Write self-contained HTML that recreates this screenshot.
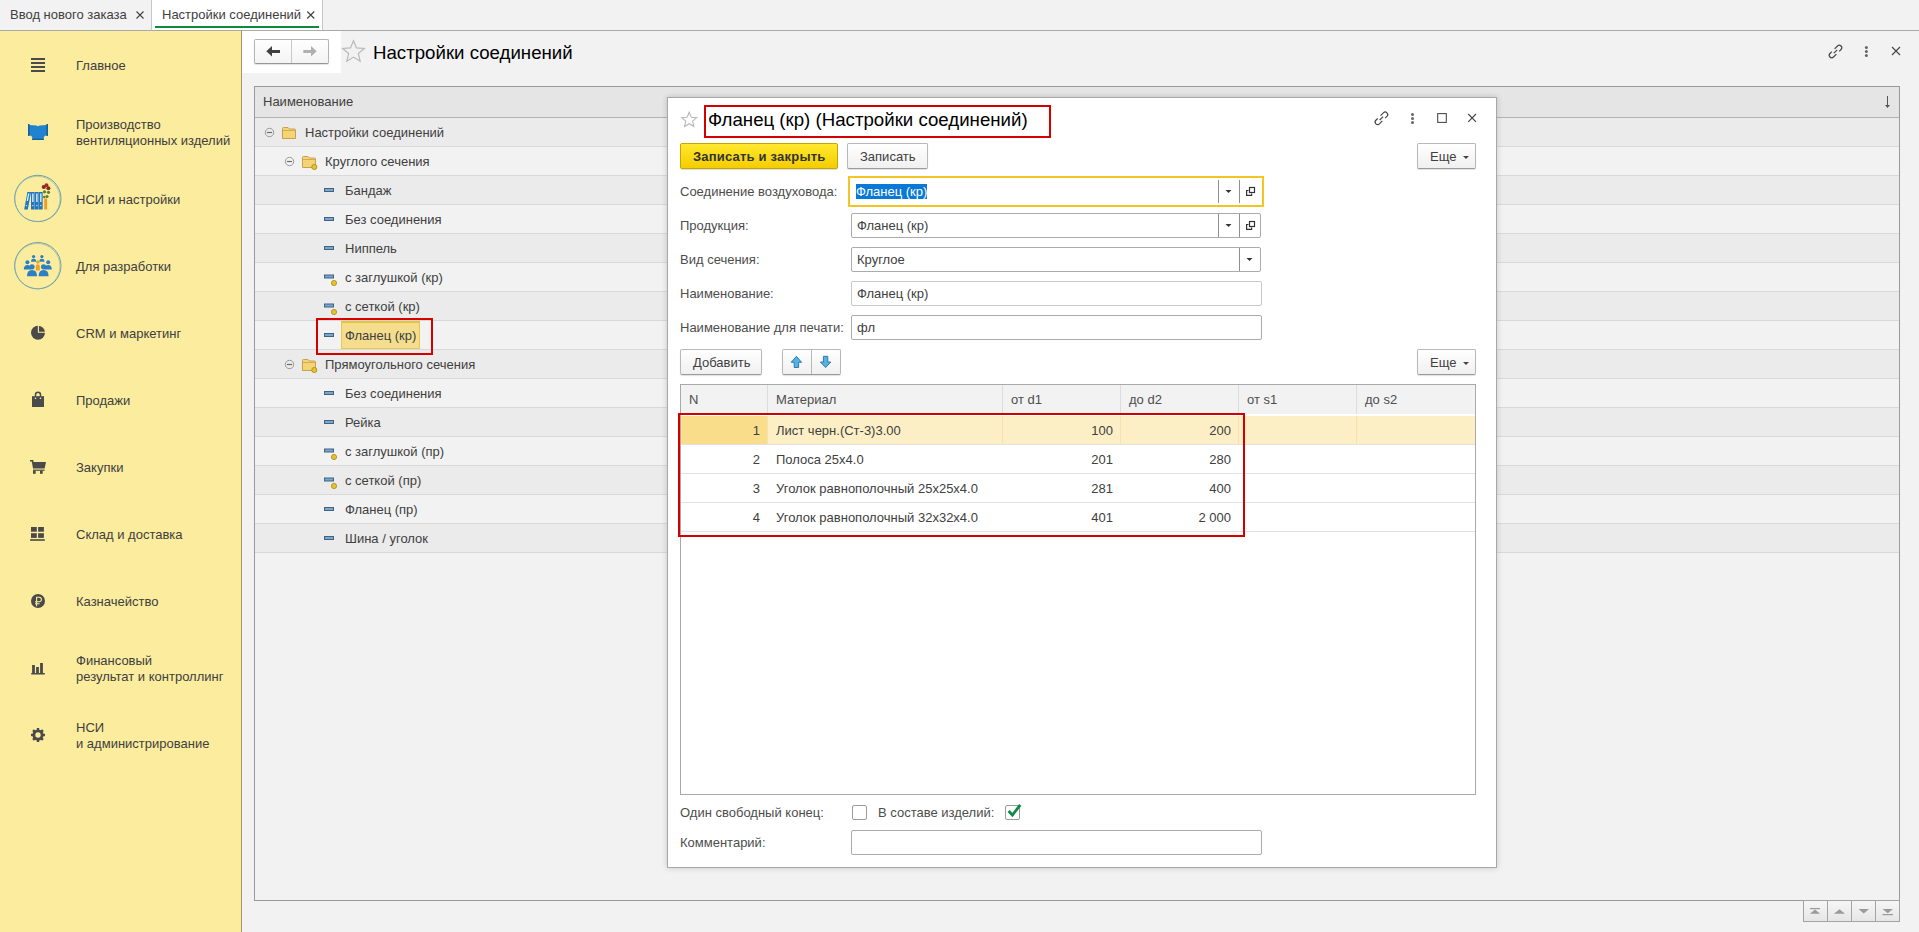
<!DOCTYPE html>
<html><head><meta charset="utf-8"><style>
*{box-sizing:border-box;margin:0;padding:0}
html,body{width:1919px;height:932px;overflow:hidden}
body{position:relative;background:#f2f2f2;font-family:"Liberation Sans",sans-serif;font-size:13px;color:#404040}
.a{position:absolute}
.t{position:absolute;white-space:nowrap;line-height:16px}
#tabbar{left:0;top:0;width:1919px;height:31px;background:#f2f2f2;border-bottom:1px solid #a8a8a8}
#tab2{left:151px;top:0;width:172px;height:31px;background:#fff;border-left:1px solid #c6c6c6;border-right:1px solid #c6c6c6;border-bottom:1px solid #a8a8a8}
#tabline{left:155px;top:26px;width:164px;height:2px;background:#0e8a3c}
#side{left:0;top:31px;width:242px;height:901px;background:#fbec9e;border-right:1px solid #a09660}
.si{position:absolute;left:76px;color:#404040;line-height:16px;white-space:nowrap}
#navwhite{left:242px;top:31px;width:99px;height:42px;background:#fff}
#list{left:254px;top:86px;width:1646px;height:815px;border:1px solid #989a9c;background:#f2f2f2}
#lhead{left:255px;top:87px;width:1644px;height:31px;background:#e5e5e5;border-bottom:1px solid #b2b2b2}
.row{position:absolute;left:255px;width:1644px;height:29px;border-bottom:1px solid #d9d9d9}
.rd{background:#ebebeb}.rl{background:#f2f2f2}
.rt{position:absolute;white-space:nowrap;line-height:16px;color:#404040}
#modal{left:667px;top:97px;width:830px;height:771px;background:#fff;border:1px solid #a8a8a8;box-shadow:0 0 6px rgba(0,0,0,.18)}
.lbl{position:absolute;left:680px;white-space:nowrap;line-height:16px;color:#4d4d4d}
.fld{position:absolute;left:851px;width:411px;height:25px;background:#fff;border:1px solid #ababab;border-radius:2px}
.btn{position:absolute;height:26px;border:1px solid #b8b8b8;border-bottom-color:#9a9a9a;border-radius:2px;background:linear-gradient(#ffffff,#f0f0f0);box-shadow:0 1px 1px rgba(0,0,0,.12)}
.btxt{position:absolute;white-space:nowrap;line-height:16px;color:#404040}
#tbl{left:680px;top:384px;width:796px;height:411px;border:1px solid #a9a9a9;background:#fff}
.th{position:absolute;top:385px;height:29px;background:#f2f2f2}
.vsep{position:absolute;width:1px;background:#dcdcdc}
.mr{position:absolute;left:681px;width:794px;height:29px;border-bottom:1px solid #e2e2e2}
.num{position:absolute;white-space:nowrap;line-height:16px;color:#404040;text-align:right}
.red{position:absolute;border:2px solid #d40000}
.sep{position:absolute;width:1px;background:#8f8f8f}
</style></head><body>
<div id="tabbar" class="a"></div>
<div id="tab2" class="a"></div>
<div id="tabline" class="a"></div>
<div class="t" style="left:10px;top:7px">Ввод нового заказа</div>
<div class="t" style="left:162px;top:7px">Настройки соединений</div>
<div id="side" class="a"></div>
<div class="si" style="top:58px">Главное</div>
<div class="si" style="top:117px">Производство<br>вентиляционных изделий</div>
<div class="si" style="top:192px">НСИ и настройки</div>
<div class="si" style="top:259px">Для разработки</div>
<div class="si" style="top:326px">CRM и маркетинг</div>
<div class="si" style="top:393px">Продажи</div>
<div class="si" style="top:460px">Закупки</div>
<div class="si" style="top:527px">Склад и доставка</div>
<div class="si" style="top:594px">Казначейство</div>
<div class="si" style="top:653px">Финансовый<br>результат и контроллинг</div>
<div class="si" style="top:720px">НСИ<br>и администрирование</div>
<div id="navwhite" class="a"></div>
<div class="a" style="left:254px;top:39px;width:75px;height:25px;border:1px solid #b4b4b4;border-bottom-color:#969696;border-radius:2px;background:linear-gradient(#ffffff,#f3f3f3);box-shadow:0 1px 1px rgba(0,0,0,.12)"></div>
<div class="a" style="left:291px;top:40px;width:1px;height:23px;background:#c8c8c8"></div>
<div class="t" style="left:373px;top:42px;font-size:18.67px;line-height:22px;color:#000">Настройки соединений</div>
<div id="list" class="a"></div>
<div id="lhead" class="a"></div>
<div class="rt" style="left:263px;top:94px">Наименование</div>
<div class="row rd" style="top:118px;height:29px"></div>
<div class="rt" style="left:305px;top:125px">Настройки соединений</div>
<div class="row rl" style="top:147px;height:29px"></div>
<div class="rt" style="left:325px;top:154px">Круглого сечения</div>
<div class="row rd" style="top:176px;height:29px"></div>
<div class="rt" style="left:345px;top:183px">Бандаж</div>
<div class="row rl" style="top:205px;height:29px"></div>
<div class="rt" style="left:345px;top:212px">Без соединения</div>
<div class="row rd" style="top:234px;height:29px"></div>
<div class="rt" style="left:345px;top:241px">Ниппель</div>
<div class="row rl" style="top:263px;height:29px"></div>
<div class="rt" style="left:345px;top:270px">с заглушкой (кр)</div>
<div class="row rd" style="top:292px;height:29px"></div>
<div class="rt" style="left:345px;top:299px">с сеткой (кр)</div>
<div class="row rl" style="top:321px;height:29px"></div>
<div class="a" style="left:341px;top:321px;width:79px;height:28px;background:#f4dd8c;border:1px solid #e9c84a;border-top:2px solid #e8c23a"></div>
<div class="rt" style="left:345px;top:328px">Фланец (кр)</div>
<div class="row rd" style="top:350px;height:29px"></div>
<div class="rt" style="left:325px;top:357px">Прямоугольного сечения</div>
<div class="row rl" style="top:379px;height:29px"></div>
<div class="rt" style="left:345px;top:386px">Без соединения</div>
<div class="row rd" style="top:408px;height:29px"></div>
<div class="rt" style="left:345px;top:415px">Рейка</div>
<div class="row rl" style="top:437px;height:29px"></div>
<div class="rt" style="left:345px;top:444px">с заглушкой (пр)</div>
<div class="row rd" style="top:466px;height:29px"></div>
<div class="rt" style="left:345px;top:473px">с сеткой (пр)</div>
<div class="row rl" style="top:495px;height:29px"></div>
<div class="rt" style="left:345px;top:502px">Фланец (пр)</div>
<div class="row rd" style="top:524px;height:29px"></div>
<div class="rt" style="left:345px;top:531px">Шина / уголок</div>
<div class="red" style="left:316px;top:318px;width:117px;height:37px"></div>
<div class="a" style="left:1803px;top:900px;width:25px;height:22px;border:1px solid #a3a3a3;background:linear-gradient(#f6f6f6,#e6e6e6)"></div>
<div class="a" style="left:1827px;top:900px;width:25px;height:22px;border:1px solid #a3a3a3;background:linear-gradient(#f6f6f6,#e6e6e6)"></div>
<div class="a" style="left:1851px;top:900px;width:25px;height:22px;border:1px solid #a3a3a3;background:linear-gradient(#f6f6f6,#e6e6e6)"></div>
<div class="a" style="left:1875px;top:900px;width:25px;height:22px;border:1px solid #a3a3a3;background:linear-gradient(#f6f6f6,#e6e6e6)"></div>
<div id="modal" class="a"></div>
<div class="red" style="left:704px;top:105px;width:347px;height:33px"></div>
<div class="t" style="left:708px;top:109px;font-size:18.67px;line-height:22px;color:#000">Фланец (кр) (Настройки соединений)</div>
<div class="a" style="left:680px;top:143px;width:158px;height:26px;border:1px solid #c4a600;border-radius:2px;background:linear-gradient(#ffe82e,#f4cd00);box-shadow:0 1px 1px rgba(0,0,0,.15)"></div>
<div class="btxt" style="left:693px;top:149px;font-weight:bold;color:#333;letter-spacing:0.2px">Записать и закрыть</div>
<div class="btn" style="left:847px;top:143px;width:81px"></div>
<div class="btxt" style="left:860px;top:149px">Записать</div>
<div class="btn" style="left:1417px;top:143px;width:59px"></div>
<div class="btxt" style="left:1430px;top:149px">Еще</div>
<div class="btn" style="left:1417px;top:349px;width:59px"></div>
<div class="btxt" style="left:1430px;top:355px">Еще</div>
<div class="lbl" style="top:184px">Соединение воздуховода:</div>
<div class="a" style="left:848px;top:176px;width:416px;height:31px;border:2px solid #f3c523;background:#fff"></div>
<div class="a" style="left:856px;top:184px;width:71px;height:15px;background:#0a78d7"></div>
<div class="t" style="left:856px;top:184px;color:#fff">Фланец (кр)</div>
<div class="sep" style="left:1218px;top:180px;height:23px"></div>
<div class="sep" style="left:1239px;top:180px;height:23px"></div>
<div class="lbl" style="top:218px">Продукция:</div>
<div class="fld" style="top:213px;width:410px;"></div>
<div class="t" style="left:857px;top:218px;color:#404040">Фланец (кр)</div>
<div class="sep" style="left:1218px;top:214px;height:23px"></div>
<div class="sep" style="left:1239px;top:214px;height:23px"></div>
<div class="lbl" style="top:252px">Вид сечения:</div>
<div class="fld" style="top:247px;width:410px;"></div>
<div class="t" style="left:857px;top:252px;color:#404040">Круглое</div>
<div class="sep" style="left:1239px;top:248px;height:23px"></div>
<div class="lbl" style="top:286px">Наименование:</div>
<div class="fld" style="top:281px;width:411px;border-color:#c9c9c9;"></div>
<div class="t" style="left:857px;top:286px;color:#404040">Фланец (кр)</div>
<div class="lbl" style="top:320px">Наименование для печати:</div>
<div class="fld" style="top:315px;width:411px;"></div>
<div class="t" style="left:857px;top:320px;color:#404040">фл</div>
<div class="btn" style="left:680px;top:349px;width:82px"></div>
<div class="btxt" style="left:693px;top:355px">Добавить</div>
<div class="btn" style="left:782px;top:349px;width:59px"></div>
<div class="a" style="left:811px;top:350px;width:1px;height:24px;background:#b8b8b8"></div>
<div id="tbl" class="a"></div>
<div class="th" style="left:681px;width:794px"></div>
<div class="vsep" style="left:767px;top:385px;height:29px"></div>
<div class="vsep" style="left:1002px;top:385px;height:29px"></div>
<div class="vsep" style="left:1120px;top:385px;height:29px"></div>
<div class="vsep" style="left:1238px;top:385px;height:29px"></div>
<div class="vsep" style="left:1356px;top:385px;height:29px"></div>
<div class="t" style="left:689px;top:392px;color:#4d4d4d">N</div>
<div class="t" style="left:776px;top:392px;color:#4d4d4d">Материал</div>
<div class="t" style="left:1011px;top:392px;color:#4d4d4d">от d1</div>
<div class="t" style="left:1129px;top:392px;color:#4d4d4d">до d2</div>
<div class="t" style="left:1247px;top:392px;color:#4d4d4d">от s1</div>
<div class="t" style="left:1365px;top:392px;color:#4d4d4d">до s2</div>
<div class="mr" style="top:416px;background:#fcefc6"></div>
<div class="a" style="left:681px;top:416px;width:86px;height:28px;background:#f9dd8b"></div>
<div class="vsep" style="left:767px;top:416px;height:28px;background:#f3e3b0"></div>
<div class="vsep" style="left:1002px;top:416px;height:28px;background:#f3e3b0"></div>
<div class="vsep" style="left:1120px;top:416px;height:28px;background:#f3e3b0"></div>
<div class="vsep" style="left:1238px;top:416px;height:28px;background:#f3e3b0"></div>
<div class="vsep" style="left:1356px;top:416px;height:28px;background:#f3e3b0"></div>
<div class="num" style="left:681px;width:79px;top:423px">1</div>
<div class="t" style="left:776px;top:423px">Лист черн.(Ст-3)3.00</div>
<div class="num" style="left:1003px;width:110px;top:423px">100</div>
<div class="num" style="left:1121px;width:110px;top:423px">200</div>
<div class="mr" style="top:445px"></div>
<div class="num" style="left:681px;width:79px;top:452px">2</div>
<div class="t" style="left:776px;top:452px">Полоса 25x4.0</div>
<div class="num" style="left:1003px;width:110px;top:452px">201</div>
<div class="num" style="left:1121px;width:110px;top:452px">280</div>
<div class="mr" style="top:474px"></div>
<div class="num" style="left:681px;width:79px;top:481px">3</div>
<div class="t" style="left:776px;top:481px">Уголок равнополочный 25x25x4.0</div>
<div class="num" style="left:1003px;width:110px;top:481px">281</div>
<div class="num" style="left:1121px;width:110px;top:481px">400</div>
<div class="mr" style="top:503px"></div>
<div class="num" style="left:681px;width:79px;top:510px">4</div>
<div class="t" style="left:776px;top:510px">Уголок равнополочный 32x32x4.0</div>
<div class="num" style="left:1003px;width:110px;top:510px">401</div>
<div class="num" style="left:1121px;width:110px;top:510px">2 000</div>
<div class="red" style="left:678px;top:413px;width:567px;height:124px"></div>
<div class="lbl" style="top:805px">Один свободный конец:</div>
<div class="a" style="left:852px;top:805px;width:15px;height:15px;border:1px solid #9a9a9a;border-radius:2px;background:#fff"></div>
<div class="t" style="left:878px;top:805px;color:#4d4d4d">В составе изделий:</div>
<div class="a" style="left:1005px;top:805px;width:15px;height:15px;border:1px solid #9a9a9a;border-radius:2px;background:#fff"></div>
<div class="lbl" style="top:835px">Комментарий:</div>
<div class="fld" style="top:830px;width:411px"></div>
<svg class="a" style="left:0;top:0" width="1919" height="932" viewBox="0 0 1919 932"><path d="M136.5 11.5 L143.5 18.5 M143.5 11.5 L136.5 18.5" stroke="#404040" stroke-width="1.1"/><path d="M307.25 11.5 L314.25 18.5 M314.25 11.5 L307.25 18.5" stroke="#404040" stroke-width="1.1"/><rect x="31" y="58" width="14" height="2" fill="#4a4a4a"/><rect x="31" y="62" width="14" height="2" fill="#4a4a4a"/><rect x="31" y="66" width="14" height="2" fill="#4a4a4a"/><rect x="31" y="70" width="14" height="2" fill="#4a4a4a"/><path d="M29 125 L36.5 125.6 Q38 126.8 39.5 125.6 L47 125 L47 135.5 L45.5 135.5 Q43.5 136 43.5 139 L32.5 139 Q32.5 136 30.5 135.5 L29 135.5 Z" fill="#1f83d0"/><rect x="28" y="124" width="1.6" height="12" fill="#17609a"/><rect x="46.4" y="124" width="1.6" height="12" fill="#17609a"/><rect x="32" y="138.6" width="12" height="1.4" fill="#17609a"/><circle cx="37.8" cy="198.5" r="23.2" fill="none" stroke="#5f9aa6" stroke-width="0.9"/><circle cx="37.4" cy="198.9" r="22.6" fill="none" stroke="#7fb0b5" stroke-width="0.6"/><circle cx="37.8" cy="265.7" r="23.2" fill="none" stroke="#5f9aa6" stroke-width="0.9"/><circle cx="37.4" cy="266.09999999999997" r="22.6" fill="none" stroke="#7fb0b5" stroke-width="0.6"/><polygon points="24.2,209.5 27.4,192 31,192 27.8,209.5" fill="#1f78c0"/><polygon points="26.6,201 28.1,193.6 29.4,193.6 27.9,201" fill="#dff3ff"/><circle cx="26.3" cy="205.6" r="0.7" fill="#dff3ff"/><rect x="31.0" y="192" width="3.7" height="17.5" fill="#1f78c0"/><rect x="32.2" y="193.5" width="1.3" height="8.5" fill="#e6f6ff"/><circle cx="32.85" cy="205.6" r="0.7" fill="#dff3ff"/><rect x="35.0" y="192" width="3.7" height="17.5" fill="#1f78c0"/><rect x="36.2" y="193.5" width="1.3" height="8.5" fill="#e6f6ff"/><circle cx="36.85" cy="205.6" r="0.7" fill="#dff3ff"/><rect x="39.0" y="192" width="3.7" height="17.5" fill="#1f78c0"/><rect x="40.2" y="193.5" width="1.3" height="8.5" fill="#e6f6ff"/><circle cx="40.85" cy="205.6" r="0.7" fill="#dff3ff"/><rect x="44.2" y="198.5" width="2.9" height="11" fill="#f29a2a"/><circle cx="44.5" cy="191.8" r="1.6" fill="#5f7d2c"/><circle cx="48.5" cy="192.3" r="1.6" fill="#5f7d2c"/><circle cx="47" cy="196.5" r="1.6" fill="#5f7d2c"/><circle cx="44.2" cy="197" r="1.2" fill="#5f7d2c"/><circle cx="43.8" cy="187" r="2.1" fill="#8e2a22"/><circle cx="46.4" cy="185.3" r="2" fill="#9a2e25"/><circle cx="48.4" cy="188.3" r="2" fill="#8e2a22"/><circle cx="33.6" cy="256.6" r="1.6" fill="#2b7fc4"/><path d="M31.0 261.80000000000007 Q31.0 258.80000000000007 33.6 258.80000000000007 Q36.2 258.80000000000007 36.2 261.80000000000007 Z" fill="#2b7fc4"/><circle cx="41.9" cy="256.6" r="1.6" fill="#2b7fc4"/><path d="M39.3 261.80000000000007 Q39.3 258.80000000000007 41.9 258.80000000000007 Q44.5 258.80000000000007 44.5 261.80000000000007 Z" fill="#2b7fc4"/><circle cx="27.4" cy="262.3" r="2.0" fill="#2b7fc4"/><path d="M23.799999999999997 269.40000000000003 Q23.799999999999997 264.90000000000003 27.4 264.90000000000003 Q31.0 264.90000000000003 31.0 269.40000000000003 Z" fill="#2b7fc4"/><circle cx="48.2" cy="262.3" r="2.0" fill="#2b7fc4"/><path d="M44.6 269.40000000000003 Q44.6 264.90000000000003 48.2 264.90000000000003 Q51.800000000000004 264.90000000000003 51.800000000000004 269.40000000000003 Z" fill="#2b7fc4"/><circle cx="37.8" cy="262" r="1.8" fill="#f0a030"/><path d="M35.8 270.5 V266.5 Q35.8 264.3 37.8 264.3 Q39.8 264.3 39.8 266.5 V270.5 Z" fill="#f0a030"/><circle cx="32.0" cy="266.8" r="2.6" fill="#2b7fc4"/><path d="M27.0 276.30000000000007 Q27.0 270.00000000000006 32.0 270.00000000000006 Q37.0 270.00000000000006 37.0 276.30000000000007 Z" fill="#2b7fc4"/><circle cx="43.6" cy="266.8" r="2.6" fill="#2b7fc4"/><path d="M38.6 276.30000000000007 Q38.6 270.00000000000006 43.6 270.00000000000006 Q48.6 270.00000000000006 48.6 276.30000000000007 Z" fill="#2b7fc4"/><circle cx="38" cy="332.8" r="7" fill="#4a4a4a"/><path d="M38.4 325 V332.3 H46" stroke="#fbec9e" stroke-width="1.1" fill="none"/><rect x="32" y="396.2" width="12" height="10.8" fill="#4a4a4a"/><path d="M35.5 398.5 V394.8 A2.5 2.5 0 0 1 40.5 394.8 V398.5" stroke="#4a4a4a" stroke-width="1.5" fill="none"/><circle cx="35.5" cy="398.3" r="0.8" fill="#fff7c8"/><circle cx="40.5" cy="398.3" r="0.8" fill="#fff7c8"/><path d="M30 460.8 H32.6 V462" stroke="#4a4a4a" stroke-width="1.6" fill="none"/><polygon points="31.8,462 46,462 44.6,468.6 33,468.6" fill="#4a4a4a"/><rect x="33" y="469.6" width="11.6" height="1.2" fill="#4a4a4a"/><rect x="33" y="470.6" width="2.7" height="3.2" fill="#4a4a4a"/><rect x="40" y="470.6" width="2.7" height="3.2" fill="#4a4a4a"/><rect x="31" y="527" width="5.8" height="4.7" fill="#4a4a4a"/><rect x="38.1" y="527" width="5.8" height="4.7" fill="#4a4a4a"/><rect x="31" y="533.2" width="5.8" height="4.7" fill="#4a4a4a"/><rect x="38.1" y="533.2" width="5.8" height="4.7" fill="#4a4a4a"/><rect x="30.1" y="539.2" width="14.7" height="1.6" fill="#4a4a4a"/><circle cx="38" cy="601" r="7" fill="#4a4a4a"/><path d="M36.6 606.3 V597.3 H39.2 A2.2 2.2 0 0 1 39.2 601.7 H35 M35 603.7 H39.6" stroke="#fbec9e" stroke-width="1.1" fill="none"/><rect x="32.1" y="665" width="2.8" height="8.5" fill="#4a4a4a"/><rect x="36.1" y="667" width="2.8" height="6.5" fill="#4a4a4a"/><rect x="40.1" y="663" width="2.8" height="10.5" fill="#4a4a4a"/><rect x="31" y="673" width="14" height="1.5" rx="0.7" fill="#4a4a4a"/><g transform="translate(38 735)"><circle r="5.6" fill="#4a4a4a"/><rect x="-1.2" y="-7" width="2.4" height="3" fill="#4a4a4a" transform="rotate(0)"/><rect x="-1.2" y="-7" width="2.4" height="3" fill="#4a4a4a" transform="rotate(45)"/><rect x="-1.2" y="-7" width="2.4" height="3" fill="#4a4a4a" transform="rotate(90)"/><rect x="-1.2" y="-7" width="2.4" height="3" fill="#4a4a4a" transform="rotate(135)"/><rect x="-1.2" y="-7" width="2.4" height="3" fill="#4a4a4a" transform="rotate(180)"/><rect x="-1.2" y="-7" width="2.4" height="3" fill="#4a4a4a" transform="rotate(225)"/><rect x="-1.2" y="-7" width="2.4" height="3" fill="#4a4a4a" transform="rotate(270)"/><rect x="-1.2" y="-7" width="2.4" height="3" fill="#4a4a4a" transform="rotate(315)"/><circle r="2.7" fill="#fbec9e"/></g><polygon points="266.3,51.3 272,46 272,56.5" fill="#404040"/><rect x="271" y="50" width="9" height="3" fill="#404040"/><polygon points="316.7,51.3 311,46 311,56.5" fill="#b0b0b0"/><rect x="303.3" y="50" width="8.5" height="3" fill="#b0b0b0"/><polygon points="353.50,40.70 356.49,47.89 364.25,48.51 358.34,53.57 360.14,61.14 353.50,57.09 346.86,61.14 348.66,53.57 342.75,48.51 350.51,47.89" fill="none" stroke="#b8b8b8" stroke-width="1.2" stroke-linejoin="miter"/><polygon points="689.20,112.20 691.29,117.22 696.71,117.66 692.58,121.20 693.84,126.49 689.20,123.66 684.56,126.49 685.82,121.20 681.69,117.66 687.11,117.22" fill="none" stroke="#b8b8b8" stroke-width="1.1"/><g transform="translate(1835.5 51.5) rotate(-45)" stroke="#444" stroke-width="1.15" fill="none"><path d="M1.2 -2.5 H5.3 A2.5 2.5 0 0 1 5.3 2.5 H2.8"/><path d="M-1.2 2.5 H-5.3 A2.5 2.5 0 0 1 -5.3 -2.5 H-2.8"/><path d="M-2.4 0 H2.4"/></g><g transform="translate(1381.4 118.3) rotate(-45)" stroke="#444" stroke-width="1.15" fill="none"><path d="M1.2 -2.5 H5.3 A2.5 2.5 0 0 1 5.3 2.5 H2.8"/><path d="M-1.2 2.5 H-5.3 A2.5 2.5 0 0 1 -5.3 -2.5 H-2.8"/><path d="M-2.4 0 H2.4"/></g><circle cx="1866.4" cy="47.4" r="1.5" fill="#666"/><circle cx="1866.4" cy="51.6" r="1.5" fill="#666"/><circle cx="1866.4" cy="55.6" r="1.5" fill="#666"/><circle cx="1412.5" cy="114.4" r="1.5" fill="#666"/><circle cx="1412.5" cy="118.4" r="1.5" fill="#666"/><circle cx="1412.5" cy="122.5" r="1.5" fill="#666"/><path d="M1892 47 L1900 55 M1900 47 L1892 55" stroke="#444" stroke-width="1.1"/><path d="M1468.2 114 L1476 121.9 M1476 114 L1468.2 121.9" stroke="#444" stroke-width="1.1"/><rect x="1437.7" y="113.6" width="8.6" height="8.8" fill="none" stroke="#444" stroke-width="1.05"/><path d="M1887.5 96 V106" stroke="#555" stroke-width="1"/><polygon points="1885,105 1890,105 1887.5,108" fill="#555"/><circle cx="269.5" cy="132.5" r="4.2" fill="none" stroke="#9a9a9a" stroke-width="1"/><path d="M266.9 132.5 H272.1" stroke="#6a6a6a" stroke-width="1.2"/><path d="M282.5 138.5 V128.5 Q282.5 127.5 283.5 127.5 H288 L289.5 129 H294.5 Q295.5 129 295.5 130 V138.5 Z" fill="#f5d475" stroke="#c8a24a" stroke-width="1"/><path d="M283 130.5 H295" stroke="#c8a24a" stroke-width="0.8"/><circle cx="289.5" cy="161.5" r="4.2" fill="none" stroke="#9a9a9a" stroke-width="1"/><path d="M286.9 161.5 H292.1" stroke="#6a6a6a" stroke-width="1.2"/><path d="M302.5 167.5 V157.5 Q302.5 156.5 303.5 156.5 H308 L309.5 158 H314.5 Q315.5 158 315.5 159 V167.5 Z" fill="#f5d475" stroke="#c8a24a" stroke-width="1"/><path d="M303 159.5 H315" stroke="#c8a24a" stroke-width="0.8"/><circle cx="314.3" cy="167" r="2.6" fill="#e6c22e" stroke="#a8891a" stroke-width="0.8"/><rect x="324.5" y="188.5" width="9" height="3" fill="#7aa6cc" stroke="#3f6384" stroke-width="1"/><rect x="324.5" y="217.5" width="9" height="3" fill="#7aa6cc" stroke="#3f6384" stroke-width="1"/><rect x="324.5" y="246.5" width="9" height="3" fill="#7aa6cc" stroke="#3f6384" stroke-width="1"/><rect x="324.5" y="275.0" width="9" height="3" fill="#7aa6cc" stroke="#3f6384" stroke-width="1"/><circle cx="334" cy="283" r="2.6" fill="#e6c22e" stroke="#a8891a" stroke-width="0.8"/><rect x="324.5" y="304.0" width="9" height="3" fill="#7aa6cc" stroke="#3f6384" stroke-width="1"/><circle cx="334" cy="312" r="2.6" fill="#e6c22e" stroke="#a8891a" stroke-width="0.8"/><rect x="324.5" y="333.5" width="9" height="3" fill="#7aa6cc" stroke="#3f6384" stroke-width="1"/><circle cx="289.5" cy="364.5" r="4.2" fill="none" stroke="#9a9a9a" stroke-width="1"/><path d="M286.9 364.5 H292.1" stroke="#6a6a6a" stroke-width="1.2"/><path d="M302.5 370.5 V360.5 Q302.5 359.5 303.5 359.5 H308 L309.5 361 H314.5 Q315.5 361 315.5 362 V370.5 Z" fill="#f5d475" stroke="#c8a24a" stroke-width="1"/><path d="M303 362.5 H315" stroke="#c8a24a" stroke-width="0.8"/><circle cx="314.3" cy="370" r="2.6" fill="#e6c22e" stroke="#a8891a" stroke-width="0.8"/><rect x="324.5" y="391.5" width="9" height="3" fill="#7aa6cc" stroke="#3f6384" stroke-width="1"/><rect x="324.5" y="420.5" width="9" height="3" fill="#7aa6cc" stroke="#3f6384" stroke-width="1"/><rect x="324.5" y="449.0" width="9" height="3" fill="#7aa6cc" stroke="#3f6384" stroke-width="1"/><circle cx="334" cy="457" r="2.6" fill="#e6c22e" stroke="#a8891a" stroke-width="0.8"/><rect x="324.5" y="478.0" width="9" height="3" fill="#7aa6cc" stroke="#3f6384" stroke-width="1"/><circle cx="334" cy="486" r="2.6" fill="#e6c22e" stroke="#a8891a" stroke-width="0.8"/><rect x="324.5" y="507.5" width="9" height="3" fill="#7aa6cc" stroke="#3f6384" stroke-width="1"/><rect x="324.5" y="536.5" width="9" height="3" fill="#7aa6cc" stroke="#3f6384" stroke-width="1"/><rect x="1810" y="908" width="10" height="1.2" fill="#9a9a9a"/><polygon points="1810,913.8 1820,913.8 1815,909.5" fill="#9a9a9a"/><polygon points="1834,913.8 1845,913.8 1839.5,909.3" fill="#9a9a9a"/><polygon points="1858.5,909 1869,909 1863.75,913.6" fill="#9a9a9a"/><polygon points="1882.5,909 1893,909 1887.75,913.3" fill="#9a9a9a"/><rect x="1882.5" y="914" width="10.5" height="1.2" fill="#9a9a9a"/><polygon points="1225.5,190 1231.5,190 1228.5,193" fill="#333"/><polygon points="1225.5,224 1231.5,224 1228.5,227" fill="#333"/><polygon points="1246.5,258 1252.5,258 1249.5,261" fill="#333"/><rect x="1249.5" y="187.5" width="5" height="5" fill="none" stroke="#333" stroke-width="1.2"/><path d="M1248.5 190.5 H1246.6 V195.3 H1251.6 V193.5" fill="none" stroke="#333" stroke-width="1.2"/><rect x="1249.5" y="221.5" width="5" height="5" fill="none" stroke="#333" stroke-width="1.2"/><path d="M1248.5 224.5 H1246.6 V229.3 H1251.6 V227.5" fill="none" stroke="#333" stroke-width="1.2"/><polygon points="1463,156 1469,156 1466,159" fill="#444"/><polygon points="1463,362 1469,362 1466,365" fill="#444"/><polygon points="796.4,356.3 801.6,362.3 798.6,362.3 798.6,367.5 794.2,367.5 794.2,362.3 791.2,362.3" fill="#4fb4ea" stroke="#2f6f98" stroke-width="0.9"/><polygon points="825.6,367.5 830.8,362 827.8,362 827.8,356.3 823.4,356.3 823.4,362 820.4,362" fill="#4fb4ea" stroke="#2f6f98" stroke-width="0.9"/><path d="M1008.6 811 L1012.4 815 L1020.3 804.8" fill="none" stroke="#0f8a48" stroke-width="2.8"/></svg>
</body></html>
